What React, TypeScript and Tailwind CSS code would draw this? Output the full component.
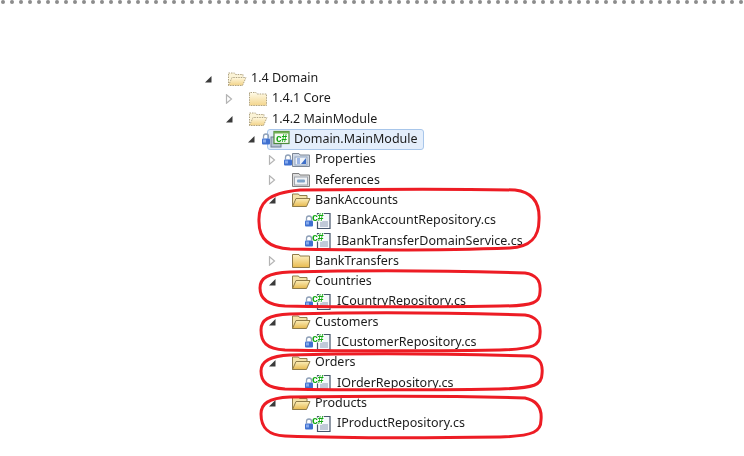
import type { ReactNode } from 'react'

function Arrow({ open }: { open?: boolean }) {
  return open ? (
    <svg width="8" height="8" viewBox="0 0 8 8" className="shrink-0">
      <path d="M7.5 1 L7.5 7.5 L1 7.5 Z" fill="#3a3a3a" />
    </svg>
  ) : (
    <svg width="8" height="10" viewBox="0 0 8 10" className="shrink-0">
      <path d="M1.5 .8 L6.5 5 L1.5 9.2 Z" fill="#fff" stroke="#b4b4b4" strokeWidth="1.2" />
    </svg>
  )
}

function Lock() {
  return (
    <svg width="10" height="12" viewBox="0 0 10 12" className="shrink-0">
      <path d="M2.5 5.5 V3.5 a2.5 2.5 0 0 1 5 0 V5.5" fill="none" stroke="#8fa0b8" strokeWidth="1.3" />
      <rect x="1" y="5.5" width="8" height="6" rx="1" fill="#3f70d0" />
      <rect x="2" y="6.5" width="3" height="3" fill="#86aaec" />
    </svg>
  )
}

function FolderClosed({ soft }: { soft?: boolean }) {
  return (
    <svg width="20" height="16" viewBox="0 0 20 16" className="shrink-0">
      <defs>
        <linearGradient id="fc" x1="0" y1="0" x2="0" y2="1">
          <stop offset="0" stopColor="#fdf3c8" />
          <stop offset="1" stopColor="#e9bb4e" />
        </linearGradient>
        <linearGradient id="fcs" x1="0" y1="0" x2="0" y2="1">
          <stop offset="0" stopColor="#fffbe8" />
          <stop offset="1" stopColor="#f3d58c" />
        </linearGradient>
      </defs>
      <path
        d="M1.5 3 V1.5 H8 L9 3 H18.5 V14.5 H1.5 Z"
        fill={soft ? 'url(#fcs)' : 'url(#fc)'}
        stroke={soft ? '#b0a484' : '#8f7c4a'}
        strokeWidth="1"
        strokeDasharray={soft ? '1.5 1' : undefined}
      />
    </svg>
  )
}

function FolderOpen({ soft }: { soft?: boolean }) {
  return (
    <svg width="20" height="16" viewBox="0 0 20 16" className="shrink-0">
      <defs>
        <linearGradient id="fo" x1="0" y1="0" x2="0" y2="1">
          <stop offset="0" stopColor="#fbeeb8" />
          <stop offset="1" stopColor="#e7b94f" />
        </linearGradient>
        <linearGradient id="fos" x1="0" y1="0" x2="0" y2="1">
          <stop offset="0" stopColor="#fff8de" />
          <stop offset="1" stopColor="#f1d288" />
        </linearGradient>
      </defs>
      <path
        d="M1.5 14.5 V2 H7.5 L8.5 3.5 H16 V6"
        fill={soft ? '#fbf3d6' : '#f4e3a8'}
        stroke={soft ? '#b0a484' : '#8f7c4a'}
        strokeWidth="1"
        strokeDasharray={soft ? '1.5 1' : undefined}
      />
      <path
        d="M1.5 14.5 L5 6.5 H19 L15.5 14.5 Z"
        fill={soft ? 'url(#fos)' : 'url(#fo)'}
        stroke={soft ? '#b0a484' : '#8f7c4a'}
        strokeWidth="1"
        strokeDasharray={soft ? '1.5 1' : undefined}
      />
    </svg>
  )
}

function CsFile() {
  return (
    <svg width="20" height="18" viewBox="0 0 20 18" className="shrink-0">
      <path d="M5.5 1.5 H18 V16.5 H5.5 Z" fill="#f6f8fc" stroke="#46556c" strokeWidth="1.2" />
      <path d="M8 10 H16 M8 12 H16 M8 14 H16" stroke="#8a9ab4" strokeWidth="1" />
      <text
        x="0"
        y="8.5"
        fontSize="10.5"
        fontWeight="700"
        fill="#12a812"
        stroke="#fff"
        strokeWidth="1.5"
        paintOrder="stroke"
        fontFamily="'Liberation Sans', sans-serif"
      >
        c#
      </text>
    </svg>
  )
}

function CsProject() {
  return (
    <svg width="20" height="18" viewBox="0 0 20 18" className="shrink-0">
      <rect x="1" y="7" width="10" height="10" fill="#b8c4d4" stroke="#6f7f92" />
      <rect x="4" y="1.5" width="15" height="12" fill="#f7fbf2" stroke="#4e8a3c" strokeWidth="1.2" />
      <rect x="4" y="1.5" width="15" height="2" fill="#6fb050" />
      <text x="6" y="11.5" fontSize="10" fontWeight="700" fill="#12a812" fontFamily="'Liberation Sans', sans-serif">
        c#
      </text>
    </svg>
  )
}

function PropertiesIcon() {
  return (
    <svg width="20" height="16" viewBox="0 0 20 16" className="shrink-0">
      <path d="M1.5 3 V1.5 H8 L9 3 H18.5 V14.5 H1.5 Z" fill="#cfd8e6" stroke="#7d8796" />
      <rect x="4" y="5" width="12" height="8" fill="#eef3fa" stroke="#8fa3bf" />
      <path d="M6 7 H9 M6 9 H9 M6 11 H9" stroke="#4a78d0" />
      <path d="M15 6 L10 12 H15 Z" fill="#3f6fc8" />
    </svg>
  )
}

function ReferencesIcon() {
  return (
    <svg width="20" height="16" viewBox="0 0 20 16" className="shrink-0">
      <path d="M1.5 3 V1.5 H8 L9 3 H18.5 V14.5 H1.5 Z" fill="#dcdcdc" stroke="#7f7f7f" />
      <rect x="3.5" y="5" width="13" height="8" fill="#f1f3f6" stroke="#a0a6ae" />
      <rect x="6" y="7.5" width="8" height="3" rx="1" fill="#7fa4c8" />
    </svg>
  )
}

type RowData = {
  label: string
  pad: string
  icon: ReactNode
  arrow?: 'open' | 'closed'
  lock?: boolean
  gap?: string
  selected?: boolean
}

const rows: RowData[] = [
  { label: '1.4 Domain', pad: 'pl-[204px]', icon: <FolderOpen soft />, arrow: 'open' },
  { label: '1.4.1 Core', pad: 'pl-[225px]', icon: <FolderClosed soft />, arrow: 'closed' },
  { label: '1.4.2 MainModule', pad: 'pl-[225px]', icon: <FolderOpen soft />, arrow: 'open' },
  { label: 'Domain.MainModule', pad: 'pl-[247px]', icon: <CsProject />, arrow: 'open', lock: true, selected: true },
  { label: 'Properties', pad: 'pl-[268px]', icon: <PropertiesIcon />, arrow: 'closed', lock: true },
  { label: 'References', pad: 'pl-[268px]', icon: <ReferencesIcon />, arrow: 'closed' },
  { label: 'BankAccounts', pad: 'pl-[268px]', icon: <FolderOpen />, arrow: 'open' },
  { label: 'IBankAccountRepository.cs', pad: 'pl-[289px]', icon: <CsFile />, lock: true, gap: 'ml-[5px]' },
  { label: 'IBankTransferDomainService.cs', pad: 'pl-[289px]', icon: <CsFile />, lock: true, gap: 'ml-[5px]' },
  { label: 'BankTransfers', pad: 'pl-[268px]', icon: <FolderClosed />, arrow: 'closed' },
  { label: 'Countries', pad: 'pl-[268px]', icon: <FolderOpen />, arrow: 'open' },
  { label: 'ICountryRepository.cs', pad: 'pl-[289px]', icon: <CsFile />, lock: true, gap: 'ml-[5px]' },
  { label: 'Customers', pad: 'pl-[268px]', icon: <FolderOpen />, arrow: 'open' },
  { label: 'ICustomerRepository.cs', pad: 'pl-[289px]', icon: <CsFile />, lock: true, gap: 'ml-[5px]' },
  { label: 'Orders', pad: 'pl-[268px]', icon: <FolderOpen />, arrow: 'open' },
  { label: 'IOrderRepository.cs', pad: 'pl-[289px]', icon: <CsFile />, lock: true, gap: 'ml-[5px]' },
  { label: 'Products', pad: 'pl-[268px]', icon: <FolderOpen />, arrow: 'open' },
  { label: 'IProductRepository.cs', pad: 'pl-[289px]', icon: <CsFile />, lock: true, gap: 'ml-[5px]' },
]

function TreeRow({ row }: { row: RowData }) {
  return (
    <div className={`flex items-center h-[20.3px] ${row.pad}`}>
      <div className="flex items-center justify-between w-[23px] shrink-0">
        {row.arrow ? <Arrow open={row.arrow === 'open'} /> : <span />}
        {row.lock && !row.selected && <span className="-mr-[2px] z-10"><Lock /></span>}
        {row.selected && <span className="-mr-[1px] z-10"><Lock /></span>}
      </div>
      {row.selected ? (
        <div className="flex items-center gap-[4px] h-[21px] -ml-[3px] pl-[2px] pr-[5px] bg-[#e4eefb] border border-[#a8c6ea] rounded-[3px]">
          {row.icon}
          <span>{row.label}</span>
        </div>
      ) : (
        <>
          {row.icon}
          <span className={row.gap ?? 'ml-[4px]'}>{row.label}</span>
        </>
      )}
    </div>
  )
}

export default function App() {
  return (
    <div className="relative w-[744px] h-[456px] overflow-hidden bg-white font-['Noto_Sans','Open_Sans',sans-serif] text-[12.5px] text-[#1c1c1c]">
      {/* dotted rule */}
      <div className="flex gap-[5px] pl-[1px]">
        {Array.from({ length: 83 }).map((_, i) => (
          <span key={i} className="w-1 h-1 shrink-0 rounded-full bg-[#8c8c8c]" />
        ))}
      </div>

      <div className="pt-[64.4px] blur-[0.3px]">
        {rows.map((row) => (
          <TreeRow key={row.label} row={row} />
        ))}
      </div>

      {/* hand drawn red marks */}
      <svg width="744" height="456" className="absolute inset-0" fill="none" stroke="#ed1c24" strokeWidth="3" strokeLinecap="round">
        <path d="M300 190 C380 189 470 189 515 190 C532 192 540 202 539 220 C539 238 530 247 510 248 C430 251 350 250 290 249 C268 248 259 238 259 222 C258 204 266 193 300 190 Z" />
        <path d="M290 272 C370 270 460 271 525 273 C538 275 541 282 540 292 C540 302 535 306 500 306 C430 307 340 307 285 306 C266 305 260 298 260 288 C260 278 268 273 290 272 Z" />
        <path d="M290 314 C370 312 460 313 525 315 C538 317 541 324 540 334 C540 345 535 349 500 350 C430 351 340 351 285 350 C266 349 261 342 261 330 C261 320 268 315 290 314 Z" />
        <path d="M290 355 C370 353 460 354 530 356 C541 358 543 365 542 374 C542 385 535 388 500 389 C430 390 340 390 285 389 C267 388 261 382 261 371 C261 362 268 356 290 355 Z" />
        <path d="M290 397 C370 396 460 396 525 398 C539 401 542 410 541 420 C541 431 535 436 500 437 C430 438 340 438 285 436 C267 435 261 427 261 414 C261 404 268 398 290 397 Z" />
      </svg>
    </div>
  )
}
